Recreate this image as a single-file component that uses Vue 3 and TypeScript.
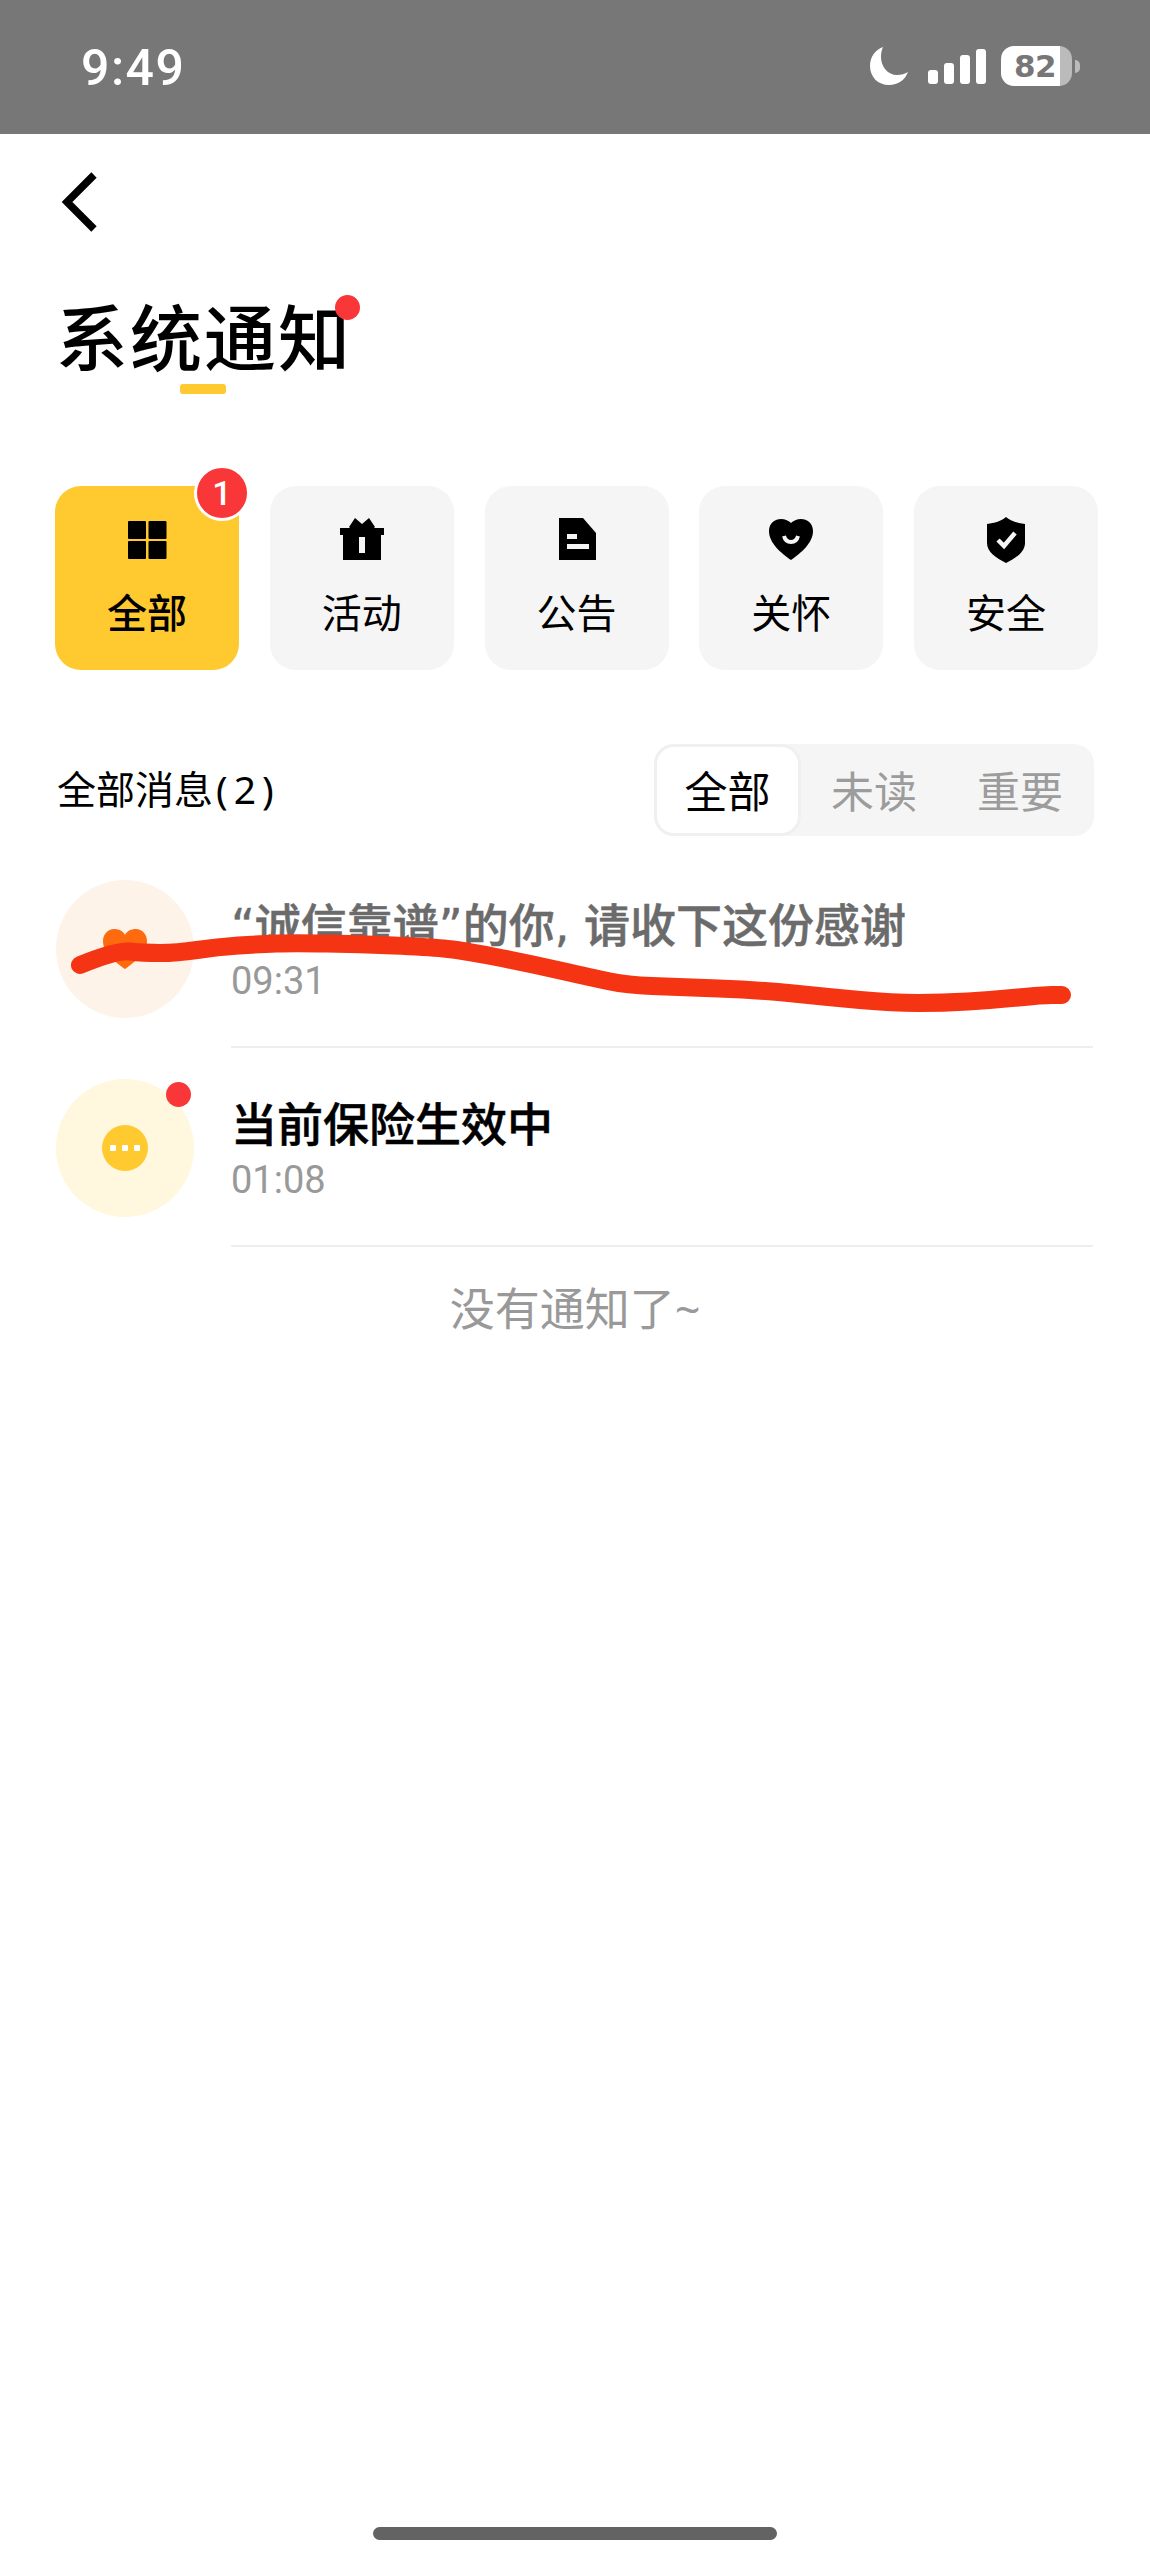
<script setup lang="ts">
interface Category {
  label: string
  active?: boolean
  badge?: number
}

interface Notice {
  title: string
  time: string
  read: boolean
  kind: 'care' | 'info'
}

const signalBars = [14, 21, 29, 35]

const categories: Category[] = [
  { label: '全部', active: true, badge: 1 },
  { label: '活动' },
  { label: '公告' },
  { label: '关怀' },
  { label: '安全' }
]

const filters = ['全部', '未读', '重要']

const notices: Notice[] = [
  { title: '“诚信靠谱”的你, 请收下这份感谢', time: '09:31', read: true, kind: 'care' },
  { title: '当前保险生效中', time: '01:08', read: false, kind: 'info' }
]

// 红色涂抹的中心线，相对 svg 顶部
const scribblePoints: [number, number][] = [
  [80, 65], [117, 50], [143, 53], [177, 53], [217, 47], [260, 44], [293, 43],
  [360, 44], [427, 47], [460, 50], [527, 63], [593, 78], [627, 85], [677, 87],
  [760, 90], [827, 97], [893, 103], [943, 103], [993, 100], [1043, 95], [1062, 95]
]

const scribblePath = scribblePoints.reduce((d, [x, y], i, pts) => {
  if (i === 0) return `M${x} ${y}`
  if (i === pts.length - 1) return `${d} L${x} ${y}`
  const [nx, ny] = pts[i + 1]
  return `${d} Q${x} ${y} ${(x + nx) / 2} ${(y + ny) / 2}`
}, '')
</script>

<template>
  <div class="page">
    <!-- 状态栏 -->
    <div class="status-bar">
      <span class="clock">9:49</span>
      <div class="status-icons">
        <svg class="moon" width="38" height="38" viewBox="0 0 38 38">
          <path d="M13 0C5 3 0 10 0 19c0 11 8 19 19 19 9 0 16-5 19-13-3 2-7 3-11 3C18 28 11 20 11 10c0-4 .7-7 2-10z" fill="#fff" />
        </svg>
        <div class="signal">
          <i v-for="h in signalBars" :key="h" :style="{ height: h + 'px' }"></i>
        </div>
        <div class="battery">
          <div class="battery-body"><span>82</span></div>
          <div class="battery-tip"></div>
        </div>
      </div>
    </div>

    <!-- 标题 -->
    <div class="back">
      <svg width="44" height="64" viewBox="0 0 44 64">
        <path d="M35 5 8 32l27 27" fill="none" stroke="#000" stroke-width="7.5" />
      </svg>
    </div>
    <div class="heading">
      <h1 class="title">系统通知<i class="title-dot"></i><i class="title-line"></i></h1>
    </div>

    <!-- 分类 -->
    <div class="categories">
      <div
        v-for="(item, index) in categories"
        :key="item.label"
        class="category"
        :class="{ active: item.active }"
      >
        <svg class="category-icon" width="48" height="48" viewBox="0 0 48 48">
          <g v-if="index === 0" fill="#000">
            <rect x="5" y="5" width="18" height="18" rx="1" />
            <rect x="25.500" y="5" width="18" height="18" rx="1" />
            <rect x="5" y="25" width="18" height="18" rx="1" />
            <rect x="25.500" y="25" width="18" height="18" rx="1" />
          </g>
          <g v-else-if="index === 1">
            <path d="M2 12h10l-1-1 6-9 7 6 7-6 6 9-1 1h10v7h-3v25H5V19H2z" fill="#000" />
            <rect x="21" y="21" width="6" height="16" fill="#f5f5f5" />
          </g>
          <g v-else-if="index === 2">
            <path d="M6 2h24l13 15v27H6z" fill="#000" />
            <rect x="14" y="18" width="10" height="5" fill="#f5f5f5" />
            <rect x="14" y="28" width="22" height="5" fill="#f5f5f5" />
          </g>
          <g v-else-if="index === 3">
            <path d="M24 44C14 37 2 27 2 15 2 7 8 3 14 3c4 0 8 2 10 4 2-2 6-4 10-4 6 0 12 4 12 12 0 12-12 22-22 29z" fill="#000" />
            <path d="M17 20c1 4 4 6 7 6s6-2 7-6" fill="none" stroke="#f5f5f5" stroke-width="4" />
          </g>
          <g v-else>
            <path d="M24 1c5 4 11 6 19 7v19c0 9-9 15-19 20C14 42 5 36 5 27V8c8-1 14-3 19-7z" fill="#000" />
            <path d="m16 24 6 6 11-13" fill="none" stroke="#f5f5f5" stroke-width="4.500" />
          </g>
        </svg>
        <span class="category-label">{{ item.label }}</span>
        <span v-if="item.badge" class="badge">{{ item.badge }}</span>
      </div>
    </div>

    <!-- 消息筛选 -->
    <div class="summary">
      <span class="summary-text">全部消息<span class="summary-count">(2)</span></span>
      <div class="segments">
        <span
          v-for="(name, i) in filters"
          :key="name"
          class="segment"
          :class="{ current: i === 0 }"
        >{{ name }}</span>
      </div>
    </div>

    <!-- 消息列表 -->
    <div class="list">
      <div v-for="notice in notices" :key="notice.time" class="row">
        <div class="avatar" :class="notice.kind">
          <svg v-if="notice.kind === 'care'" width="44" height="40" viewBox="0 0 44 40">
            <path d="M22 40C12 33 0 24 0 12 0 5 5 0 11 0c5 0 9 2 11 6 2-4 6-6 11-6 6 0 11 5 11 12 0 12-12 21-22 28z" fill="#ff6a0f" />
          </svg>
          <div v-else class="more"><i></i><i></i><i></i></div>
          <i v-if="!notice.read" class="unread"></i>
        </div>
        <div class="row-body">
          <div class="row-title" :class="{ read: notice.read }">{{ notice.title }}</div>
          <div class="row-time">{{ notice.time }}</div>
        </div>
      </div>
    </div>
    <div class="end-tip">没有通知了~</div>

    <div class="home-bar"></div>

    <!-- 截图上的红色涂抹 -->
    <svg class="scribble" width="1150" height="120" viewBox="0 0 1150 120">
      <path
        :d="scribblePath"
        fill="none"
        stroke="#f53413"
        stroke-width="18"
        stroke-linecap="round"
        stroke-linejoin="round"
      />
    </svg>
  </div>
</template>

<style scoped>
.page {
  position: relative;
  display: flex;
  flex-direction: column;
  width: 1150px;
  height: 2559px;
  background: #fff;
  color: #000;
  overflow: hidden;
  font-family: "Noto Sans", "Noto Sans CJK SC", sans-serif;
}

.status-bar {
  display: flex;
  align-items: center;
  justify-content: space-between;
  height: 134px;
  flex-shrink: 0;
  padding: 0 70px 0 81px;
  box-sizing: border-box;
  background: #777;
  color: #fff;
}

.clock {
  font-family: Roboto, sans-serif;
  font-size: 50px;
  font-weight: 500;
  letter-spacing: 1.500px;
  line-height: 1;
  margin-top: 1px;
}

.status-icons {
  display: flex;
  align-items: center;
  margin-top: -2px;
}

.moon {
  margin-right: 20px;
}

.signal {
  display: flex;
  align-items: flex-end;
  gap: 6px;
  height: 35px;
  margin-right: 15px;
}

.signal i {
  width: 10px;
  border-radius: 3px;
  background: #fff;
}

.battery {
  display: flex;
  align-items: center;
}

.battery-body {
  display: flex;
  align-items: center;
  width: 71px;
  height: 40px;
  padding-left: 13px;
  box-sizing: border-box;
  border-radius: 13px;
  background: linear-gradient(to right, #fff 59px, #bbb 59px);
}

.battery-body span {
  font-family: "DejaVu Sans", sans-serif;
  font-size: 31px;
  font-weight: 700;
  line-height: 1;
  letter-spacing: -0.500px;
  color: #777;
}

.battery-tip {
  width: 5px;
  height: 13px;
  margin-left: 3px;
  border-radius: 0 6px 6px 0;
  background: #bbb;
}

.back {
  display: flex;
  padding: 36px 0 0 59px;
  height: 67px;
}

.heading {
  display: flex;
  padding: 60px 0 0 56px;
}

.title {
  position: relative;
  margin: 0;
  font-size: 72px;
  font-weight: 500;
  line-height: 80px;
  letter-spacing: 2px;
}

.title i {
  position: absolute;
  display: block;
}

.title-dot {
  top: -2px;
  right: -8px;
  width: 25px;
  height: 25px;
  border-radius: 50%;
  background: #f93738;
}

.title-line {
  top: 87px;
  left: 124px;
  width: 46px;
  height: 10px;
  border-radius: 3px;
  background: #ffc930;
}

.categories {
  display: grid;
  grid-template-columns: repeat(5, 184px);
  justify-content: space-between;
  margin-top: 109px;
  padding: 0 52px 0 55px;
}

.category {
  position: relative;
  display: flex;
  flex-direction: column;
  align-items: center;
  height: 184px;
  padding-top: 30px;
  box-sizing: border-box;
  border-radius: 26px;
  background: #f5f5f5;
}

.category.active {
  background: #ffc930;
}

.category-label {
  margin-top: 26px;
  font-size: 40px;
  line-height: 46px;
}

.category.active .category-label {
  font-weight: 500;
}

.badge {
  position: absolute;
  top: -21px;
  right: -11px;
  display: flex;
  align-items: center;
  justify-content: center;
  width: 50px;
  height: 50px;
  border: 3px solid #fff;
  border-radius: 50%;
  background: #f93738;
  color: #fff;
  font-family: Roboto, sans-serif;
  font-size: 34px;
  font-weight: 500;
}

.summary {
  display: flex;
  align-items: center;
  justify-content: space-between;
  margin-top: 74px;
  padding: 0 56px 0 57px;
}

.summary-text {
  font-size: 39px;
  line-height: 46px;
  padding-bottom: 2px;
}

.summary-count {
  margin-left: 3px;
  letter-spacing: 6px;
}

.segments {
  display: flex;
  width: 440px;
  height: 92px;
  border-radius: 20px;
  background: #f5f5f5;
}

.segment {
  display: flex;
  align-items: center;
  justify-content: center;
  width: 146px;
  padding-bottom: 2px;
  box-sizing: border-box;
  color: #9c9c9c;
  font-size: 43px;
}

.segment.current {
  width: 147px;
  border: 3px solid #f0f0f0;
  border-radius: 20px;
  background: #fff;
  color: #000;
}

.list {
  margin-top: 13px;
}

.row {
  display: flex;
  height: 199px;
  padding-left: 56px;
  padding-right: 57px;
}

.avatar {
  position: relative;
  display: flex;
  align-items: center;
  justify-content: center;
  flex-shrink: 0;
  width: 138px;
  height: 138px;
  margin-top: 31px;
  border-radius: 50%;
}

.avatar.care {
  background: #fef3e8;
}

.avatar.info {
  background: #fff7de;
}

.more {
  display: flex;
  align-items: center;
  justify-content: center;
  gap: 6px;
  width: 46px;
  height: 46px;
  border-radius: 50%;
  background: #ffc930;
}

.more i {
  width: 6px;
  height: 6px;
  border-radius: 1px;
  background: #fff;
}

.unread {
  position: absolute;
  top: 3px;
  right: 3px;
  width: 25px;
  height: 25px;
  border-radius: 50%;
  background: #f93738;
}

.row-body {
  flex: 1;
  margin-left: 37px;
  padding-top: 49px;
  border-bottom: 2px solid #eee;
}

.row-title {
  font-family: "DejaVu Sans", "Noto Sans CJK SC", sans-serif;
  font-size: 46px;
  font-weight: 500;
  line-height: 56px;
  white-space: nowrap;
  -webkit-text-stroke: 0.500px currentColor;
}

.row-title.read {
  color: #6b6b6b;
}

.row-time {
  margin-top: 5px;
  color: #999;
  font-family: Roboto, sans-serif;
  font-size: 38px;
  line-height: 44px;
}

.end-tip {
  margin-top: 32px;
  color: #999;
  font-size: 45px;
  line-height: 60px;
  text-align: center;
}

.home-bar {
  align-self: center;
  width: 404px;
  height: 13px;
  margin-top: auto;
  margin-bottom: 19px;
  border-radius: 7px;
  background: #636363;
}

.scribble {
  position: absolute;
  top: 900px;
  left: 0;
  pointer-events: none;
}
</style>
